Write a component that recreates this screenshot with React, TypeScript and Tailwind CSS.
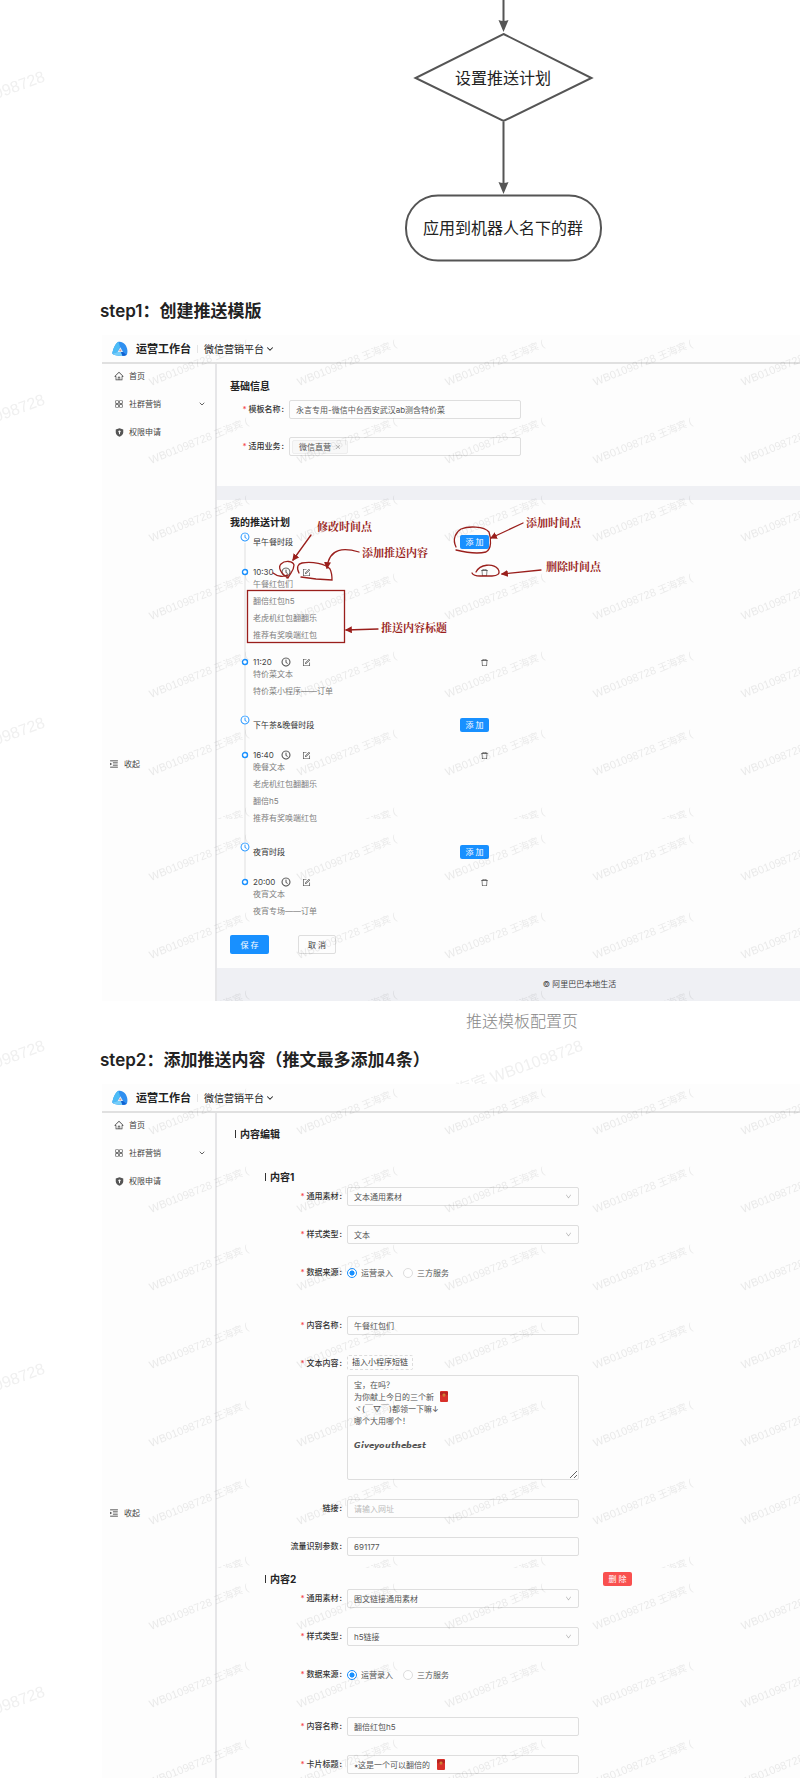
import { ReactNode } from "react";
import {
  AiOutlineAppstore,
  AiOutlineClockCircle,
  AiOutlineClose,
  AiOutlineDelete,
  AiOutlineDown,
  AiOutlineForm,
  AiOutlineHome,
  AiOutlineMenuUnfold,
} from "react-icons/ai";
import { ChevronDown } from "lucide-react";

type Entry = { time: string; items: string[] };
type Period = { name: string; entries: Entry[] };

const periods: Period[] = [
  {
    name: "早午餐时段",
    entries: [
      {
        time: "10:30",
        items: ["午餐红包们", "翻倍红包h5", "老虎机红包翻翻乐", "推荐有奖唤端红包"],
      },
      { time: "11:20", items: ["特价菜文本", "特价菜小程序——订单"] },
    ],
  },
  {
    name: "下午茶&晚餐时段",
    entries: [
      {
        time: "16:40",
        items: ["晚餐文本", "老虎机红包翻翻乐", "翻倍h5", "推荐有奖唤端红包"],
      },
    ],
  },
  {
    name: "夜宵时段",
    entries: [{ time: "20:00", items: ["夜宵文本", "夜宵专场——订单"] }],
  },
];

const message = `宝，在吗？
为你献上今日的三个新
ヾ(￣▽￣)都领一下嘛↓
哪个大用哪个！

𝙂𝙞𝙫𝙚𝙮𝙤𝙪𝙩𝙝𝙚𝙗𝙚𝙨𝙩`;

const fieldClass =
  "block h-[19px] w-[232px] rounded-xs border border-[#dedede] bg-[#fdfdfd] px-[6px] text-[8px] text-[#555] outline-none placeholder:text-[#bbb]";

function Logo() {
  return (
    <svg width="16" height="16" viewBox="0 0 16 16" aria-hidden="true">
      <path d="M6.500.8C10.500-.2 15.200 4 15.400 9.500c.1 2-.1 3.600-.9 4.500C11.500 15.600 3 15.200.3 12.800.6 9.500 3.200 2 6.500.8z" fill="#2f8ff0" />
      <path d="M6.500.8C3.200 2 .6 9.500.3 12.800L5.500 11 8 6z" fill="#4cbcf6" />
      <path d="M.3 12.800c2.200 1.900 6.700 2.400 10.200 2.200L9 11H5.500z" fill="#74cdf9" />
      <path d="M14.500 14c-1 .5-2.500.9-4 1L9 11h2z" fill="#1160cf" />
      <path d="M8.300 6.200l2.700 4.800H5.600z" fill="#e6eef8" />
      <circle cx="8.300" cy="9.500" r="1" fill="#d79a8c" />
    </svg>
  );
}

function ShieldIcon() {
  return (
    <svg width="9" height="9" viewBox="0 0 18 18" aria-hidden="true">
      <path
        fillRule="evenodd"
        d="M9 .5l7.500 2.300v6.400c0 4-3.200 6.500-7.500 8.300-4.300-1.800-7.500-4.300-7.500-8.300V2.800zM9 4.800a2.300 2.300 0 00-1 4.400v3.300h2V9.200a2.300 2.300 0 00-1-4.400z"
        fill="#555"
      />
    </svg>
  );
}

function RedPacket({ className = "" }: { className?: string }) {
  return (
    <svg width="8" height="11" viewBox="0 0 8 11" className={className} aria-hidden="true">
      <rect width="8" height="11" rx="1" fill="#d8302a" />
      <path d="M0 1v2.500C2 5.300 6 5.300 8 3.500V1z" fill="#b82220" />
      <circle cx="4" cy="4" r="1.500" fill="#d99a3c" />
      <circle cx="4" cy="4" r=".6" fill="#a3271c" />
    </svg>
  );
}

function Watermark({ id, cut }: { id: string; cut: number }) {
  // the pattern starts over after `cut` pixels
  const text = (
    <text
      x="49"
      y="48"
      fontSize="11"
      fill="#000"
      fillOpacity=".08"
      transform="rotate(-22 49 48)"
      fontFamily='"Liberation Sans", "Noto Sans CJK SC", sans-serif'
    >
      WB01098728 <tspan fontSize="10">王海宾 (</tspan>
    </text>
  );
  return (
    <svg className="pointer-events-none absolute inset-0 h-full w-full" aria-hidden="true">
      <defs>
        <pattern id={id + "a"} width="148" height="78" y="3" patternUnits="userSpaceOnUse">
          {text}
        </pattern>
        <pattern id={id + "b"} width="148" height="78" y={cut + 14} patternUnits="userSpaceOnUse">
          {text}
        </pattern>
      </defs>
      <rect width="100%" height={cut} fill={`url(#${id}a)`} />
      <rect y={cut + 12} width="100%" height="100%" fill={`url(#${id}b)`} />
    </svg>
  );
}

function PageWatermark() {
  return (
    <svg className="pointer-events-none absolute inset-0 h-full w-full" aria-hidden="true">
      <defs>
        <pattern id="page" x="50" width="538" height="323" patternUnits="userSpaceOnUse">
          <text
            x="534"
            y="81"
            fontSize="16"
            textAnchor="end"
            fill="#f0f0f0"
            transform="rotate(-20 534 81)"
            fontFamily='"Liberation Sans", "Noto Sans CJK SC", sans-serif'
          >
            王海宾 WB01098728
          </text>
        </pattern>
      </defs>
      <rect width="100%" height="100%" fill="url(#page)" />
    </svg>
  );
}

function FlowChart() {
  return (
    <svg width="200" height="287" viewBox="0 0 200 287" className="relative bg-white">
      <g stroke="#555" strokeWidth="2" fill="none">
        <path d="M100.500 0v22M100.500 122v64" />
        <path d="M100.500 34l88 44-88 43-88-43z" />
        <rect x="3" y="195.500" width="195" height="65" rx="32" />
      </g>
      <path d="M95.500 20q5 2 10 0l-5 12zM95.500 182q5 2 10 0l-5 12z" fill="#555" />
      <g fontSize="16" fill="#222" textAnchor="middle">
        <text x="100" y="84">设置推送计划</text>
        <text x="100" y="234">应用到机器人名下的群</text>
      </g>
    </svg>
  );
}

function Annotations() {
  return (
    <svg className="pointer-events-none absolute inset-0 h-full w-full" aria-hidden="true">
      <defs>
        <marker id="head" viewBox="0 0 6 6" refX="5" refY="3" markerWidth="7" markerHeight="7" orient="auto" markerUnits="userSpaceOnUse">
          <path d="M0 0l6 3-6 3z" fill="#9a1f1c" />
        </marker>
      </defs>
      <g fill="none" stroke="#9a1f1c" strokeWidth="1.300" strokeLinecap="round">
        <path d="M209 200L191 225" markerEnd="url(#head)" />
        <path d="M257 217C243 213 227 212 225 233" markerEnd="url(#head)" />
        <path d="M421 188L389 203" markerEnd="url(#head)" />
        <path d="M439 235L400 239" markerEnd="url(#head)" />
        <path d="M276 294L244 295" markerEnd="url(#head)" />
        <path d="M354 212C350 204 354 197 359 194C366 191 382 191 387 197C389 203 390 214 384 217C376 219 362 217 354 215" />
        <path d="M374 237C378 229 391 228 396 234C399 239 395 241 390 241L378 241C373 241 371 240 370 238" />
        <path d="M171 238C176 242 182 242 185 240L185 243M186 243C178 238 176 232 179 229C183 225 191 226 192 230C192 236 188 238 186 243" />
        <path d="M197 238C194 232 196 229 200 228C210 226 224 229 228 234C230 238 230 242 230 245L214 244L199 242" />
        <rect x="145.500" y="255.500" width="97" height="52" />
      </g>
      <g
        fill="#9a1f1c"
        fontSize="11"
        fontWeight="bold"
        fontFamily='"Liberation Serif", "Noto Serif CJK SC", "Noto Sans CJK SC", serif'
      >
        <text x="215" y="196">修改时间点</text>
        <text x="260" y="222">添加推送内容</text>
        <text x="424" y="192">添加时间点</text>
        <text x="444" y="236">删除时间点</text>
        <text x="279" y="297">推送内容标题</text>
      </g>
    </svg>
  );
}

function Workbench({ children }: { children: ReactNode }) {
  return (
    <div className="bg-[#fdfdfd]">
      <header className="flex h-[29px] items-center border-b-2 border-[#e0e0e0] pl-[10px] text-[#222]">
        <Logo />
        <span className="ml-2 text-[11px] leading-4 font-bold">运营工作台</span>
        <span className="mx-[6px] h-2 w-px bg-[#e5e5e5]" />
        <button type="button" className="flex items-center gap-px text-[10px] leading-4">
          微信营销平台
          <ChevronDown className="size-[10px]" strokeWidth={2.5} />
        </button>
      </header>
      <div className="flex">
        <nav className="w-[115px] shrink-0 border-r-2 border-[#e6e6e8] text-[8px] text-[#444]">
          <ul className="flex flex-col gap-1">
            <li>
              <a href="#home" className="flex h-6 items-center gap-[5px] pl-3">
                <AiOutlineHome className="size-[10px]" />
                首页
              </a>
            </li>
            <li>
              <a href="#group" className="flex h-6 items-center gap-[5px] pr-[9px] pl-3">
                <AiOutlineAppstore className="size-[10px]" />
                社群营销
                <ChevronDown className="ml-auto size-2" strokeWidth={2.5} />
              </a>
            </li>
            <li>
              <a href="#auth" className="flex h-6 items-center gap-[5px] pl-[13px]">
                <ShieldIcon />
                权限申请
              </a>
            </li>
          </ul>
          <button type="button" className="mt-[308px] flex h-6 items-center gap-[5px] pl-[7px]">
            <AiOutlineMenuUnfold className="size-[10px] text-[#222]" />
            收起
          </button>
        </nav>
        <main className="min-w-0 flex-1">{children}</main>
      </div>
    </div>
  );
}

function Label({ htmlFor, text, required, className }: { htmlFor: string; text: string; required?: boolean; className: string }) {
  return (
    <label htmlFor={htmlFor} className={`mr-1 flex shrink-0 justify-end text-[8px] leading-[19px] font-medium text-[#333] ${className}`}>
      {required && <span className="mr-[2px] text-[#f5484b]">*</span>}
      {text}
      <span className="mx-px">:</span>
    </label>
  );
}

function Row({ id, text, required, children }: { id: string; text: string; required?: boolean; children: ReactNode }) {
  return (
    <div className="flex">
      <Label htmlFor={id} text={text} required={required} className="w-[78px]" />
      {children}
    </div>
  );
}

function SelectField({ id, value }: { id: string; value: string }) {
  return (
    <div className="relative">
      <select id={id} className={`${fieldClass} appearance-none`}>
        <option>{value}</option>
      </select>
      <AiOutlineDown className="pointer-events-none absolute top-[6px] right-[7px] size-[7px] text-[#aaa]" />
    </div>
  );
}

function SourceField({ id }: { id: string }) {
  const radioClass =
    "size-[10px] appearance-none rounded-full border border-[#ddd] bg-white checked:border-[#1890ff] checked:bg-[radial-gradient(circle,#1890ff_40%,transparent_50%)]";
  return (
    <div className="flex h-[19px] items-center gap-[10px] text-[8px] text-[#555]">
      <label className="flex items-center gap-1">
        <input id={id} type="radio" name={id} defaultChecked className={radioClass} />
        运营录入
      </label>
      <label className="flex items-center gap-1">
        <input type="radio" name={id} className={radioClass} />
        三方服务
      </label>
    </div>
  );
}

function AddButton() {
  return (
    <button type="button" className="h-[14px] w-[29px] rounded-xs bg-[#1890ff] text-[8px] leading-[14px] text-white">
      添 加
    </button>
  );
}

function PushPlan() {
  return (
    <div className="relative mt-[6px] ml-[10px]">
      <div className="absolute top-2 bottom-8 left-1 w-[2px] bg-[#eee]" />
      <div className="relative flex w-[249px] flex-col gap-[23px]">
        {periods.map((period) => (
          <section key={period.name} className="flex flex-col gap-4">
            <div className="flex h-[14px] items-center gap-[3px]">
              <AiOutlineClockCircle className="-mt-[10px] size-[10px] rounded-full bg-white text-[#1890ff]" strokeWidth={20} />
              <h4 className="flex-1 text-[8px] text-[#333]">{period.name}</h4>
              <AddButton />
            </div>
            {period.entries.map((entry) => (
              <div key={entry.time}>
                <div className="flex h-[14px] items-center text-[#444]">
                  <svg width="10" height="8" viewBox="0 0 10 8" aria-hidden="true">
                    <circle cx="5" cy="4" r="2.500" fill="#fff" stroke="#1890ff" strokeWidth="1.400" />
                  </svg>
                  <span className="ml-[3px] w-7 text-[8px]">{entry.time}</span>
                  <button type="button" aria-label="修改时间点">
                    <AiOutlineClockCircle className="size-[10px]" strokeWidth={20} />
                  </button>
                  <button type="button" aria-label="添加推送内容" className="ml-[11px]">
                    <AiOutlineForm className="size-[9px]" />
                  </button>
                  <button type="button" aria-label="删除时间点" className="ml-auto">
                    <AiOutlineDelete className="size-[9px]" />
                  </button>
                </div>
                <ul className="mt-px ml-[13px] flex flex-col gap-[9px] text-[8px] leading-[8px] text-[#808080]">
                  {entry.items.map((item) => (
                    <li key={item}>{item}</li>
                  ))}
                </ul>
              </div>
            ))}
          </section>
        ))}
      </div>
    </div>
  );
}

function TemplatePage() {
  return (
    <Workbench>
      <section className="px-[13px] pt-[15px] pb-[30px]">
        <h3 className="text-[10px] leading-[14px] font-bold text-[#222]">基础信息</h3>
        <form className="mt-[7px] flex flex-col gap-[18px]">
          <div className="flex">
            <Label htmlFor="tpl" text="模板名称" required className="w-[55px]" />
            <input id="tpl" className={fieldClass} defaultValue="永言专用-微信中台西安武汉ab测含特价菜" />
          </div>
          <div className="flex">
            <Label htmlFor="biz" text="适用业务" required className="w-[55px]" />
            <div className="flex h-[19px] w-[232px] items-center rounded-xs border border-[#dedede] px-[2px]">
              <button
                id="biz"
                type="button"
                className="flex h-[14px] items-center gap-1 rounded-xs border border-[#eee] bg-[#f8f8f8] px-[6px] text-[8px] text-[#555]"
              >
                微信直营
                <AiOutlineClose className="size-[6px] text-[#888]" />
              </button>
            </div>
          </div>
        </form>
      </section>
      <div className="h-[14px] bg-[#eff0f4]" />
      <section className="px-[13px] pt-[15px] pb-[14px]">
        <h3 className="text-[10px] leading-[14px] font-bold text-[#222]">我的推送计划</h3>
        <PushPlan />
        <div className="mt-5 flex gap-[29px] text-[8px]">
          <button type="button" className="h-[19px] w-[39px] rounded-xs bg-[#1890ff] text-white">
            保 存
          </button>
          <button type="button" className="h-[19px] w-[38px] rounded-xs border border-[#dedede] bg-[#fdfdfd] text-[#444]">
            取 消
          </button>
        </div>
      </section>
      <footer className="bg-[#eff0f4] text-center text-[8px] leading-[33px] text-[#444]">© 阿里巴巴本地生活</footer>
    </Workbench>
  );
}

function ContentHeading({ children }: { children: ReactNode }) {
  return (
    <h3 className="flex items-center gap-1 text-[10px] leading-[14px] font-bold text-[#222]">
      <span className="h-2 w-px bg-[#333]" />
      {children}
    </h3>
  );
}

function ContentPage() {
  return (
    <Workbench>
      <div className="px-[18px] pt-[14px] pb-1">
        <ContentHeading>内容编辑</ContentHeading>
        <form className="mt-[29px] ml-[30px]">
          <ContentHeading>内容1</ContentHeading>
          <div className="mt-[3px] flex flex-col gap-[19px]">
            <Row id="m1" text="通用素材" required>
              <SelectField id="m1" value="文本通用素材" />
            </Row>
            <Row id="s1" text="样式类型" required>
              <SelectField id="s1" value="文本" />
            </Row>
            <Row id="d1" text="数据来源" required>
              <SourceField id="d1" />
            </Row>
          </div>
          <div className="mt-[34px] flex flex-col gap-[19px]">
            <Row id="n1" text="内容名称" required>
              <input id="n1" className={fieldClass} defaultValue="午餐红包们" />
            </Row>
            <Row id="t1" text="文本内容" required>
              <div className="pt-px">
                <button
                  type="button"
                  className="block h-[15px] rounded-xs border border-dashed border-[#ddd] px-1 text-[8px] leading-[13px] text-[#444]"
                >
                  插入小程序短链
                </button>
                <div className="relative mt-[5px]">
                  <textarea
                    id="t1"
                    className="block h-[105px] w-[232px] rounded-xs border border-[#dedede] bg-[#fdfdfd] px-[6px] py-[3px] text-[8px] leading-[12px] text-[#555] outline-none"
                    defaultValue={message}
                  />
                  <RedPacket className="absolute top-4 left-[93px]" />
                </div>
              </div>
            </Row>
            <Row id="l1" text="链接">
              <input id="l1" className={fieldClass} placeholder="请输入网址" />
            </Row>
            <Row id="p1" text="流量识别参数">
              <input id="p1" className={fieldClass} defaultValue="691177" />
            </Row>
          </div>
          <div className="mt-4 flex w-[367px] justify-between">
            <ContentHeading>内容2</ContentHeading>
            <button type="button" className="h-[14px] w-[29px] rounded-xs bg-[#f9504f] text-[8px] leading-[14px] text-white">
              删 除
            </button>
          </div>
          <div className="mt-[3px] flex flex-col gap-[19px]">
            <Row id="m2" text="通用素材" required>
              <SelectField id="m2" value="图文链接通用素材" />
            </Row>
            <Row id="s2" text="样式类型" required>
              <SelectField id="s2" value="h5链接" />
            </Row>
            <Row id="d2" text="数据来源" required>
              <SourceField id="d2" />
            </Row>
          </div>
          <div className="mt-[33px] flex flex-col gap-[19px]">
            <Row id="n2" text="内容名称" required>
              <input id="n2" className={fieldClass} defaultValue="翻倍红包h5" />
            </Row>
            <Row id="c2" text="卡片标题" required>
              <div className="relative">
                <input id="c2" className={fieldClass} defaultValue="⭑这是一个可以翻倍的" />
                <RedPacket className="absolute top-1 left-[90px]" />
              </div>
            </Row>
          </div>
        </form>
      </div>
    </Workbench>
  );
}

export default function App() {
  return (
    <div className="relative overflow-x-hidden bg-white font-[Inter,'Noto_Sans_CJK_SC',sans-serif]">
      <PageWatermark />
      <article className="relative ml-[102px] min-w-[840px]">
        <div className="flex justify-center pr-[38px]">
          <FlowChart />
        </div>
        <h2 className="mt-3 -ml-[2px] text-[17px] leading-6 font-semibold text-[#222]">step1：创建推送模版</h2>
        <figure className="mt-3">
          <div className="relative">
            <TemplatePage />
            <Watermark id="wm1" cut={484} />
            <Annotations />
          </div>
          <figcaption className="mt-2 text-center text-base leading-6 font-light text-[#888]">推送模板配置页</figcaption>
        </figure>
        <h2 className="mt-[15px] -ml-[2px] text-[17px] leading-6 font-semibold text-[#222]">
          step2：添加推送内容（推文最多添加4条）
        </h2>
        <div className="relative mt-3">
          <ContentPage />
          <Watermark id="wm2" cut={484} />
        </div>
      </article>
    </div>
  );
}
